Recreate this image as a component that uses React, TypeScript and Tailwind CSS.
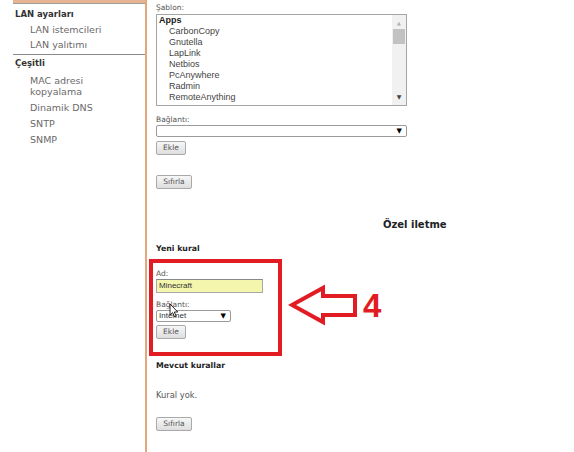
import React from "react";

const SIDEBAR_LAN = ["LAN istemcileri", "LAN yalıtımı"];
const SIDEBAR_MISC = ["MAC adresi kopyalama", "Dinamik DNS", "SNTP", "SNMP"];
const APPS = ["CarbonCopy", "Gnutella", "LapLink", "Netbios", "PcAnywhere", "Radmin", "RemoteAnything"];

const ui = "font-['DejaVu_Sans',Verdana,sans-serif]";
const arial = "font-['Liberation_Sans',Arial,sans-serif]";

function Button({ label, w }: { label: string; w: string }) {
  return (
    <button
      className={`${ui} ${w} flex h-[14px] items-center justify-center rounded-[2px] border border-[#a9a9a9] bg-gradient-to-b from-[#f7f7f7] to-[#dedede] text-[7.5px] leading-none text-[#555]`}
    >
      {label}
    </button>
  );
}

function Select({ value, w }: { value: string; w: string }) {
  return (
    <div
      className={`${w} flex h-[12px] items-center justify-between rounded-[2px] border border-[#9a9a9a] bg-white pl-[2px] pr-[4px]`}
    >
      <span className={`${arial} text-[8px] leading-none text-[#333]`}>{value}</span>
      <span className="text-[7px] leading-none text-black">▼</span>
    </div>
  );
}

export default function App() {
  return (
    <div className={`${ui} relative flex h-[452px] w-[574px] overflow-hidden bg-white`}>
      {/* ===== Menu latéral ===== */}
      <aside className="h-full w-[147px] shrink-0 border-r-2 border-[#e5a67c] pl-[13px]">
        <div className="h-[3px] bg-[#e8b391]" />
        <div className="h-px bg-[#9d9d9d]" />
        <p className="mt-[3px] pl-[2px] text-[8.5px] font-bold leading-[14px] text-[#333]">LAN ayarları</p>
        <ul className="mt-[3px] flex flex-col gap-[4px] pl-[17px]">
          {SIDEBAR_LAN.map((s) => (
            <li key={s} className="text-[9.5px] leading-[11px] text-[#6a6a6a]">
              {s}
            </li>
          ))}
        </ul>
        <div className="mt-[3.5px] h-px bg-[#8a8a8a]" />
        <p className="mt-px pl-[2px] text-[8.5px] font-bold leading-[14px] text-[#333]">Çeşitli</p>
        <ul className="mt-[5px] flex w-[90px] flex-col gap-[5px] pl-[17px]">
          {SIDEBAR_MISC.map((s) => (
            <li key={s} className="text-[9.5px] leading-[11px] text-[#6a6a6a]">
              {s}
            </li>
          ))}
        </ul>
      </aside>

      {/* ===== Contenu ===== */}
      <main className="flex min-w-0 flex-1 flex-col pl-[9px] text-[#555]">
        <p className="mt-[2px] text-[7.5px] leading-[12px]">Şablon:</p>
        <div className="flex h-[92px] w-[251px] border border-[#a5a5a5] bg-white">
          <div className={`${arial} flex-1 text-[9px] leading-[11px] text-[#444]`}>
            <p className="pl-[2px] font-bold text-[#222]">Apps</p>
            {APPS.map((a) => (
              <p key={a} className="pl-[12px]">
                {a}
              </p>
            ))}
          </div>
          <div className="flex w-[14px] flex-col items-center bg-[#f1f1f1]">
            <span className="mt-[5px] text-[5px] leading-[6px] text-[#b0b0b0]">▲</span>
            <div className="mt-[3px] h-[15px] w-[12px] bg-[#c2c2c2]" />
            <span className="mt-auto mb-[5px] text-[6px] leading-[6px] text-[#444]">▼</span>
          </div>
        </div>

        <p className="mt-[9px] text-[7.5px] leading-[10px]">Bağlantı:</p>
        <Select value="" w="w-[251px]" />
        <div className="mt-[4px]">
          <Button label="Ekle" w="w-[30px]" />
        </div>
        <div className="mt-[20px]">
          <Button label="Sıfırla" w="w-[36px]" />
        </div>

        <p className="mt-[29px] ml-[227px] text-[10px] font-bold leading-[14px] text-[#222]">Özel iletme</p>
        <p className="mt-[11px] text-[7.8px] font-bold leading-[12px] text-[#222]">Yeni kural</p>

        <div className="mt-[4px] flex items-start">
          {/* cadre d'annotation rouge */}
          <div className="relative -ml-[7px] h-[97px] w-[133px] border-[4px] border-[#e21c23] pl-[3px] pt-[6px]">
            <p className="text-[7.5px] leading-[10px]">Ad:</p>
            <div className="flex h-[14px] w-[107px] items-center border border-[#a8a8a8] border-t-[#888] bg-[#f4f6ad] pl-[2px]">
              <span className={`${arial} text-[8px] leading-none text-[#333]`}>Minecraft</span>
            </div>
            <p className="mt-[7px] text-[7.5px] leading-[10px]">Bağlantı:</p>
            <Select value="Internet" w="w-[75px]" />
            <div className="mt-[3px]">
              <Button label="Ekle" w="w-[30px]" />
            </div>
            {/* curseur souris */}
            <svg className="absolute left-[16px] top-[40px]" width="10" height="15" viewBox="0 0 10 15">
              <path d="M1 1 L1 12 L3.6 9.6 L5.6 14 L7.2 13.3 L5.3 9 L8.8 9 Z" fill="#fff" stroke="#111" strokeWidth="0.9" strokeLinejoin="round" />
            </svg>
          </div>
          <svg className="ml-[6px] mt-[25px] shrink-0" width="72" height="42" viewBox="0 0 72 42">
            <polygon
              points="4,21 35,4 35,12 67,12 67,31 35,31 35,38"
              fill="#fff"
              stroke="#e21c23"
              strokeWidth="4"
              strokeLinejoin="miter"
            />
          </svg>
          <span className={`${arial} mt-[30px] ml-[3px] text-[33px] font-bold leading-[33px] text-[#e21c23]`}>4</span>
        </div>

        <p className="mt-[4px] text-[7.8px] font-bold leading-[12px] text-[#222]">Mevcut kurallar</p>
        <p className="mt-[17px] text-[8.3px] leading-[12px]">Kural yok.</p>
        <div className="mt-[16px]">
          <Button label="Sıfırla" w="w-[36px]" />
        </div>
      </main>
    </div>
  );
}
